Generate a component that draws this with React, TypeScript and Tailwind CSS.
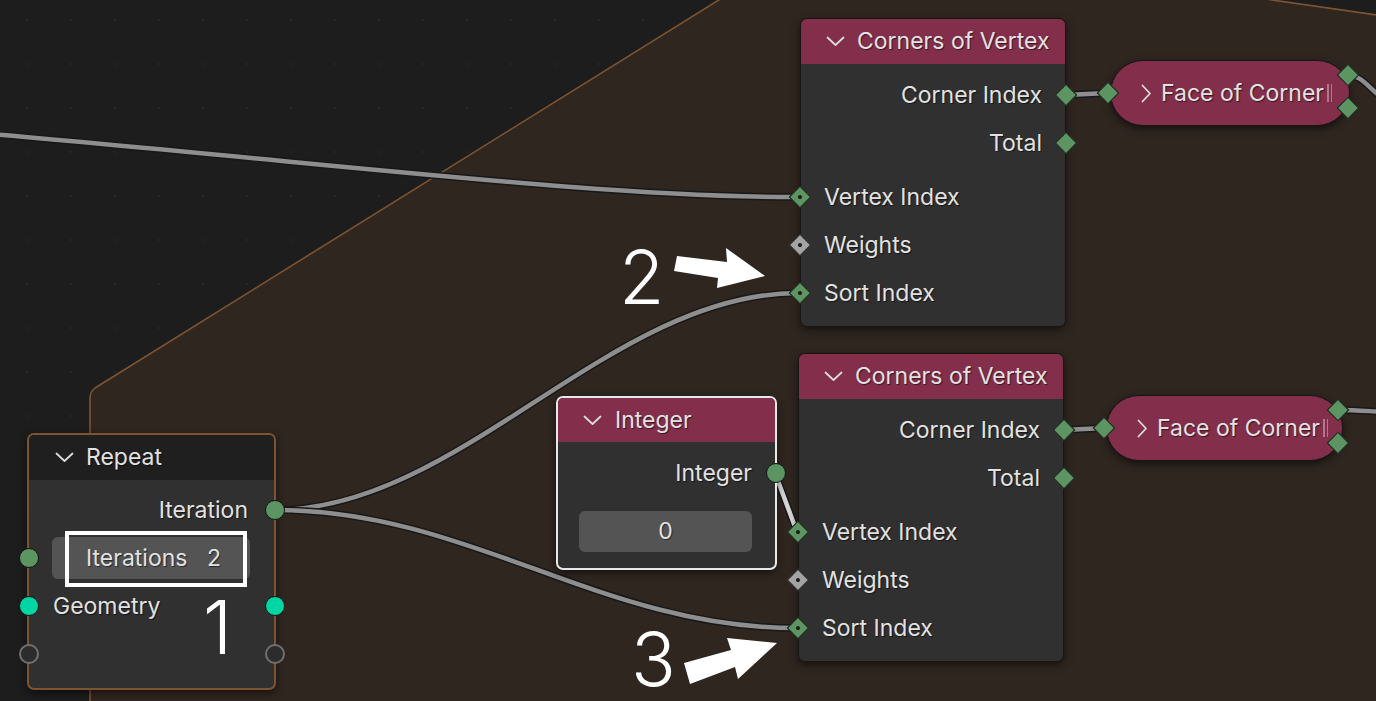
import React from "react";

type DProps = { side: "left" | "right"; gray?: boolean; dot?: boolean; off?: string };

function Diamond({ side, gray, dot, off }: DProps) {
  const pos = side === "left" ? "-left-[9px]" : "-right-[9px]";
  const color = gray ? "bg-[#a3a3a3]" : "bg-[#5c9462]";
  return (
    <div
      className={`absolute ${off ?? pos} top-1/2 -translate-y-1/2 rotate-45 w-[16px] h-[16px] border-[1.5px] border-[#161616] ${color} flex items-center justify-center`}
    >
      {dot ? <div className="w-[4px] h-[4px] rounded-full bg-[#1b1b1b]" /> : null}
    </div>
  );
}

function Chevron() {
  return (
    <svg width="19" height="11" viewBox="0 0 19 11" className="shrink-0">
      <path d="M1.5 1.5 L9.5 9 L17.5 1.5" fill="none" stroke="#dcdcdc" strokeWidth="1.8" strokeLinecap="round" strokeLinejoin="round" />
    </svg>
  );
}

function ChevronRight() {
  return (
    <svg width="11" height="19" viewBox="0 0 11 19" className="shrink-0">
      <path d="M1.5 1.5 L9 9.5 L1.5 17.5" fill="none" stroke="#dcdcdc" strokeWidth="1.8" strokeLinecap="round" strokeLinejoin="round" />
    </svg>
  );
}

const txt = "text-[23px] text-[#e2e2e2] [text-shadow:1px_1px_1px_rgba(0,0,0,0.55)] whitespace-nowrap";

function CornersNode({ cls }: { cls: string }) {
  return (
    <div className={`absolute ${cls} w-[266px] h-[309px] rounded-[7px] bg-[#303030] border border-[#161616] shadow-[0_3px_8px_rgba(0,0,0,0.55)] flex flex-col`}>
      <div className="h-[45px] bg-[#832e4b] rounded-t-[6px] flex items-center pl-[25px] gap-[12px]">
        <Chevron />
        <span className={txt}>Corners of Vertex</span>
      </div>
      <div className="pt-[7px] flex flex-col">
        <div className="relative h-[48px] flex items-center justify-end pr-[23px]">
          <span className={txt}>Corner Index</span>
          <Diamond side="right" />
        </div>
        <div className="relative h-[48px] flex items-center justify-end pr-[23px]">
          <span className={txt}>Total</span>
          <Diamond side="right" />
        </div>
        <div className="h-[6px]" />
        <div className="relative h-[48px] flex items-center pl-[23px]">
          <span className={txt}>Vertex Index</span>
          <Diamond side="left" dot />
        </div>
        <div className="relative h-[48px] flex items-center pl-[23px]">
          <span className={txt}>Weights</span>
          <Diamond side="left" gray dot />
        </div>
        <div className="relative h-[48px] flex items-center pl-[23px]">
          <span className={txt}>Sort Index</span>
          <Diamond side="left" dot />
        </div>
      </div>
    </div>
  );
}

function FaceNode({ cls, r1, r2, l }: { cls: string; r1: string; r2: string; l: string }) {
  return (
    <div className={`absolute ${cls} h-[66px] rounded-full bg-[#832e4b] border border-[#161616] shadow-[0_3px_8px_rgba(0,0,0,0.55)] flex items-center pl-[30px]`}>
      <ChevronRight />
      <span className={`${txt} ml-[9px]`}>Face of Corner</span>
      <div className="ml-[3px] flex gap-[2px] h-[18px]">
        <div className="w-[1.5px] h-full bg-[#b0788c]" />
        <div className="w-[1.5px] h-full bg-[#b0788c]" />
      </div>
      <Diamond side="left" off={l} />
      <div className={`absolute ${r1} rotate-45 w-[16px] h-[16px] border-[1.5px] border-[#161616] bg-[#5c9462]`} />
      <div className={`absolute ${r2} rotate-45 w-[16px] h-[16px] border-[1.5px] border-[#161616] bg-[#5c9462]`} />
    </div>
  );
}

export default function App() {
  return (
    <div className="relative w-[1376px] h-[701px] overflow-hidden bg-[#1d1d1d] bg-[radial-gradient(circle,#272727_1px,transparent_1.6px)] bg-[length:44px_44px] bg-[position:5px_-2px] font-['Inter',sans-serif]">
      {/* frame and links */}
      <svg className="absolute inset-0" width="1376" height="701" viewBox="0 0 1376 701">
        <path d="M90 705 L90 398 Q90 392 95 388 L722 -2 L1262 -2 L1376 15 L1376 705 Z" fill="#2f2620" />
        <path d="M90 705 L90 398 Q90 392 95 388 L722 -2" fill="none" stroke="#7e5430" strokeWidth="1.6" />
        <path d="M1262 -1.5 L1380 15.5" fill="none" stroke="#7e5430" strokeWidth="1.6" />
        {/* links */}
        <g fill="none" strokeLinecap="round">
          <path d="M-10 134 C 350 165, 600 197, 795 197" stroke="#181818" strokeWidth="7.5" />
          <path d="M-10 134 C 350 165, 600 197, 795 197" stroke="#8e8e8e" strokeWidth="4.5" />
          <path d="M275 510 C 460 510, 610 293, 798 293" stroke="#181818" strokeWidth="7.5" />
          <path d="M275 510 C 460 510, 610 293, 798 293" stroke="#8e8e8e" strokeWidth="4.5" />
          <path d="M275 510 C 470 510, 600 628, 796 628" stroke="#181818" strokeWidth="7.5" />
          <path d="M275 510 C 470 510, 600 628, 796 628" stroke="#8e8e8e" strokeWidth="4.5" />
          <path d="M775 473 L797 532" stroke="#181818" strokeWidth="7.5" />
          <path d="M775 473 L797 532" stroke="#d6d6d6" strokeWidth="4.5" />
          <path d="M1066 95 L1108 93" stroke="#181818" strokeWidth="7.5" />
          <path d="M1066 95 L1108 93" stroke="#8e8e8e" strokeWidth="4.5" />
          <path d="M1064 430 L1104 428" stroke="#181818" strokeWidth="7.5" />
          <path d="M1064 430 L1104 428" stroke="#8e8e8e" strokeWidth="4.5" />
          <path d="M1347 75 C 1362 75, 1368 88, 1385 100" stroke="#181818" strokeWidth="7.5" />
          <path d="M1347 75 C 1362 75, 1368 88, 1385 100" stroke="#8e8e8e" strokeWidth="4.5" />
          <path d="M1337 410 C 1358 410, 1365 411, 1385 412" stroke="#181818" strokeWidth="7.5" />
          <path d="M1337 410 C 1358 410, 1365 411, 1385 412" stroke="#8e8e8e" strokeWidth="4.5" />
        </g>
      </svg>

      <CornersNode cls="left-[800px] top-[18px]" />
      <CornersNode cls="left-[798px] top-[353px]" />

      <FaceNode cls="left-[1110px] top-[60px] w-[240px]" l="-left-[11px]" r1="left-[229px] top-[6px]" r2="left-[229px] top-[39px]" />
      <FaceNode cls="left-[1106px] top-[395px] w-[237px]" l="-left-[11px]" r1="left-[223px] top-[6px]" r2="left-[223px] top-[39px]" />

      {/* Integer node */}
      <div className="absolute left-[556px] top-[396px] w-[221px] h-[174px] rounded-[7px] bg-[#303030] border-2 border-[#e8e8e8] shadow-[0_3px_8px_rgba(0,0,0,0.55)] flex flex-col">
        <div className="h-[44px] bg-[#832e4b] rounded-t-[5px] flex items-center pl-[25px] gap-[13px]">
          <Chevron />
          <span className={txt}>Integer</span>
        </div>
        <div className="pt-[7px] flex flex-col">
          <div className="relative h-[48px] flex items-center justify-end pr-[23px]">
            <span className={txt}>Integer</span>
            <div className="absolute -right-[11px] top-1/2 -translate-y-1/2 w-[20px] h-[20px] rounded-full bg-[#5c9462] border-[1.5px] border-[#161616]" />
          </div>
          <div className="ml-[21px] mt-[14px] w-[173px] h-[41px] rounded-[6px] bg-[#545454] flex items-center justify-center">
            <span className={txt}>0</span>
          </div>
        </div>
      </div>

      {/* Repeat node */}
      <div className="absolute left-[27px] top-[433px] w-[249px] h-[257px] rounded-[7px] bg-[#303030] border-2 border-[#7e5430] shadow-[0_3px_8px_rgba(0,0,0,0.55)] flex flex-col">
        <div className="h-[45px] bg-[#1f1f1f] rounded-t-[5px] flex items-center pl-[26px] gap-[12px]">
          <Chevron />
          <span className={txt}>Repeat</span>
        </div>
        <div className="pt-[6px] flex flex-col">
          <div className="relative h-[48px] flex items-center justify-end pr-[26px]">
            <span className={txt}>Iteration</span>
            <div className="absolute -right-[11px] top-1/2 -translate-y-1/2 w-[20px] h-[20px] rounded-full bg-[#5c9462] border-[1.5px] border-[#161616]" />
          </div>
          <div className="relative h-[48px] flex items-center">
            <div className="ml-[23px] w-[198px] h-[42px] rounded-[6px] bg-[#545454] flex items-center justify-between pl-[34px] pr-[29px]">
              <span className={txt}>Iterations</span>
              <span className={txt}>2</span>
            </div>
            <div className="absolute -left-[10px] top-1/2 -translate-y-1/2 w-[20px] h-[20px] rounded-full bg-[#5c9462] border-[1.5px] border-[#161616]" />
          </div>
          <div className="relative h-[48px] flex items-center pl-[24px]">
            <span className={txt}>Geometry</span>
            <div className="absolute -left-[10px] top-1/2 -translate-y-1/2 w-[20px] h-[20px] rounded-full bg-[#00d6a3] border-[1.5px] border-[#161616]" />
            <div className="absolute -right-[11px] top-1/2 -translate-y-1/2 w-[20px] h-[20px] rounded-full bg-[#00d6a3] border-[1.5px] border-[#161616]" />
          </div>
          <div className="relative h-[48px] flex items-center">
            <div className="absolute -left-[10px] top-1/2 -translate-y-1/2 w-[20px] h-[20px] rounded-full bg-[#2c2c2c] border-2 border-[#707070]" />
            <div className="absolute -right-[11px] top-1/2 -translate-y-1/2 w-[20px] h-[20px] rounded-full bg-[#2c2c2c] border-2 border-[#707070]" />
          </div>
        </div>
      </div>

      {/* annotations */}
      <div className="absolute left-[65px] top-[531px] w-[182px] h-[56px] border-4 border-white" />
      <div className="absolute left-[203px] top-[597px] text-[74px] leading-[60px] font-light text-white">1</div>
      <div className="absolute left-[619px] top-[247px] text-[74px] leading-[60px] font-light text-white">2</div>
      <div className="absolute left-[631px] top-[629px] text-[74px] leading-[60px] font-light text-white">3</div>
      <svg className="absolute inset-0 pointer-events-none" width="1376" height="701" viewBox="0 0 1376 701">
        <polygon points="677,256 727,262 726,248 765,276 717,288 718,278 674,271" fill="#ffffff" />
        <polygon points="684,663 731,650 727,638 777,643 738,679 735,667 690,684" fill="#ffffff" />
      </svg>
    </div>
  );
}
